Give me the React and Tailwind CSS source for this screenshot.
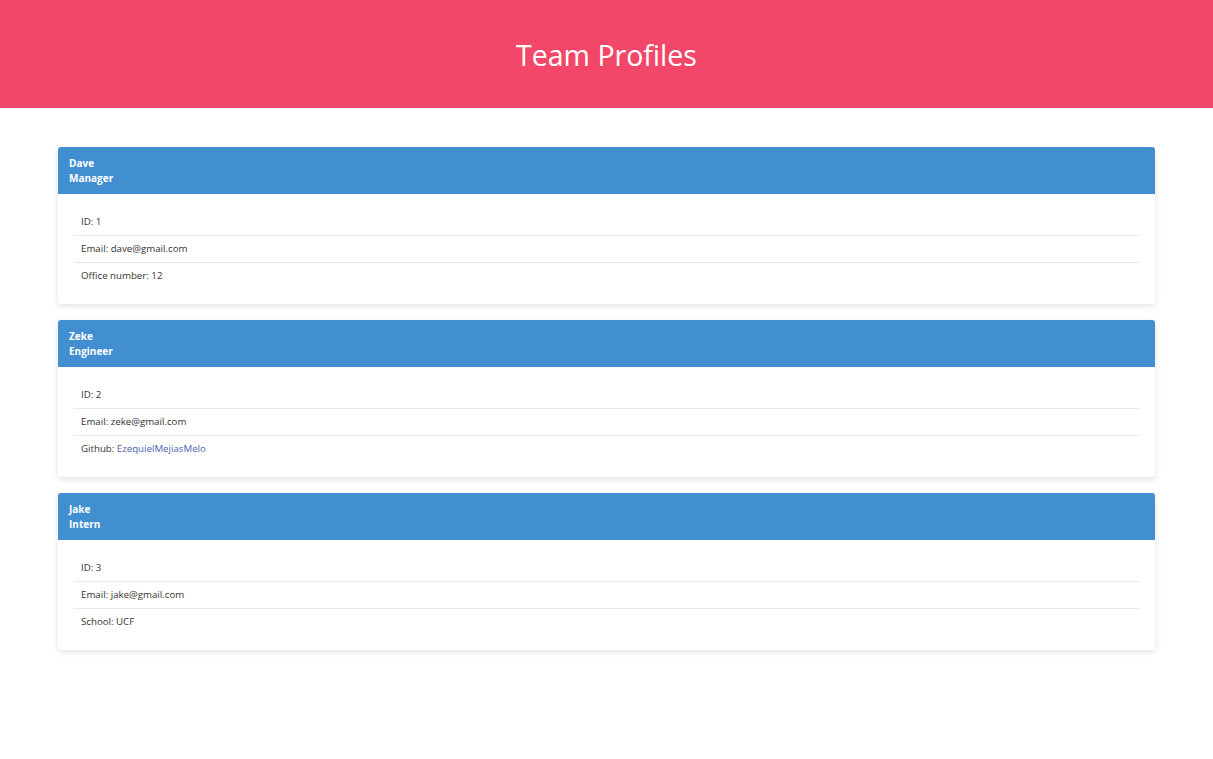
const team = [
  {
    name: "Dave",
    role: "Manager",
    id: 1,
    email: "dave@gmail.com",
    extra: { label: "Office number", value: "12" },
  },
  {
    name: "Zeke",
    role: "Engineer",
    id: 2,
    email: "zeke@gmail.com",
    extra: { label: "Github", value: "EzequielMejiasMelo", link: true },
  },
  {
    name: "Jake",
    role: "Intern",
    id: 3,
    email: "jake@gmail.com",
    extra: { label: "School", value: "UCF" },
  },
];

function ProfileCard({ member }) {
  return (
    <div className="bg-white rounded-[3px] shadow-[0_2px_6px_rgba(0,0,0,0.12)] overflow-hidden">
      <div className="bg-[#418fd0] text-white font-bold text-[10px] leading-[15px] px-[11px] pt-[9px] pb-[8px]">
        <div>{member.name}</div>
        <div>{member.role}</div>
      </div>
      <ul className="px-4 pt-[15px] pb-[14px] text-[9.7px] text-[#333]">
        <li className="h-[27px] flex items-center px-[7px] border-b border-[#e8e8e8]">ID: {member.id}</li>
        <li className="h-[27px] flex items-center px-[7px] border-b border-[#e8e8e8]">Email: {member.email}</li>
        <li className="h-[27px] flex items-center px-[7px]">
          {member.extra.label}:&nbsp;
          {member.extra.link ? (
            <a href="#" className="text-[#4b5fae]">{member.extra.value}</a>
          ) : (
            member.extra.value
          )}
        </li>
      </ul>
    </div>
  );
}

export default function App() {
  return (
    <div className="min-h-screen bg-white" style={{ fontFamily: '"Open Sans", "Noto Sans", sans-serif' }}>
      <header className="h-[108px] bg-[#f34769] flex items-center justify-center">
        <h1 className="text-white text-[28.5px] font-normal pt-[2px]">Team Profiles</h1>
      </header>
      <main className="px-[58px] pt-[39px] flex flex-col gap-4">
        {team.map((member) => (
          <ProfileCard key={member.id} member={member} />
        ))}
      </main>
    </div>
  );
}
